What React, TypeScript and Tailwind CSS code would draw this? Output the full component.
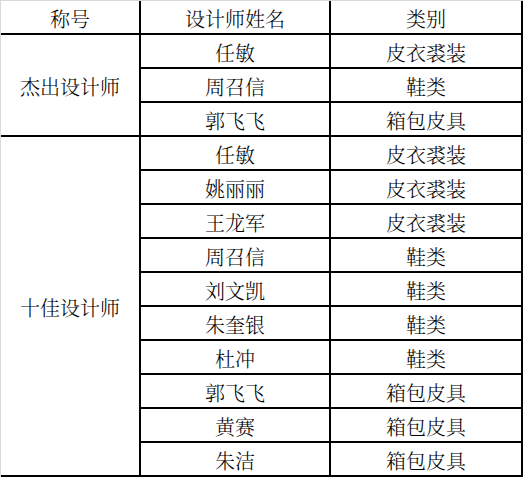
import React from "react";

type Group = { title: string; rows: [string, string][] };

const groups: Group[] = [
  {
    title: "杰出设计师",
    rows: [
      ["任敏", "皮衣裘装"],
      ["周召信", "鞋类"],
      ["郭飞飞", "箱包皮具"],
    ],
  },
  {
    title: "十佳设计师",
    rows: [
      ["任敏", "皮衣裘装"],
      ["姚丽丽", "皮衣裘装"],
      ["王龙军", "皮衣裘装"],
      ["周召信", "鞋类"],
      ["刘文凯", "鞋类"],
      ["朱奎银", "鞋类"],
      ["杜冲", "鞋类"],
      ["郭飞飞", "箱包皮具"],
      ["黄赛", "箱包皮具"],
      ["朱洁", "箱包皮具"],
    ],
  },
];

const cell =
  "flex items-center justify-center border-r-2 border-b-2 border-black pt-[3px] leading-none";

export default function App() {
  return (
    <div
      className="w-[523px] h-[477px] bg-white text-black text-[20px] font-light"
      style={{ fontFamily: '"Noto Serif CJK SC", "Noto Sans CJK SC", "Noto Sans", serif' }}
    >
      <div className="grid grid-cols-[140px_190px_192px] auto-rows-[34px] border-t border-l border-[#d9d9d9] box-content w-[522px]">
        <div className={cell}>称号</div>
        <div className={cell}>设计师姓名</div>
        <div className={cell}>类别</div>
        {groups.map((g) => (
          <React.Fragment key={g.title}>
            <div
              className={cell}
              style={{ gridRow: `span ${g.rows.length} / span ${g.rows.length}` }}
            >
              {g.title}
            </div>
            {g.rows.map(([name, cat], i) => (
              <React.Fragment key={i}>
                <div className={`${cell} col-start-2`}>{name}</div>
                <div className={cell}>{cat}</div>
              </React.Fragment>
            ))}
          </React.Fragment>
        ))}
      </div>
    </div>
  );
}
